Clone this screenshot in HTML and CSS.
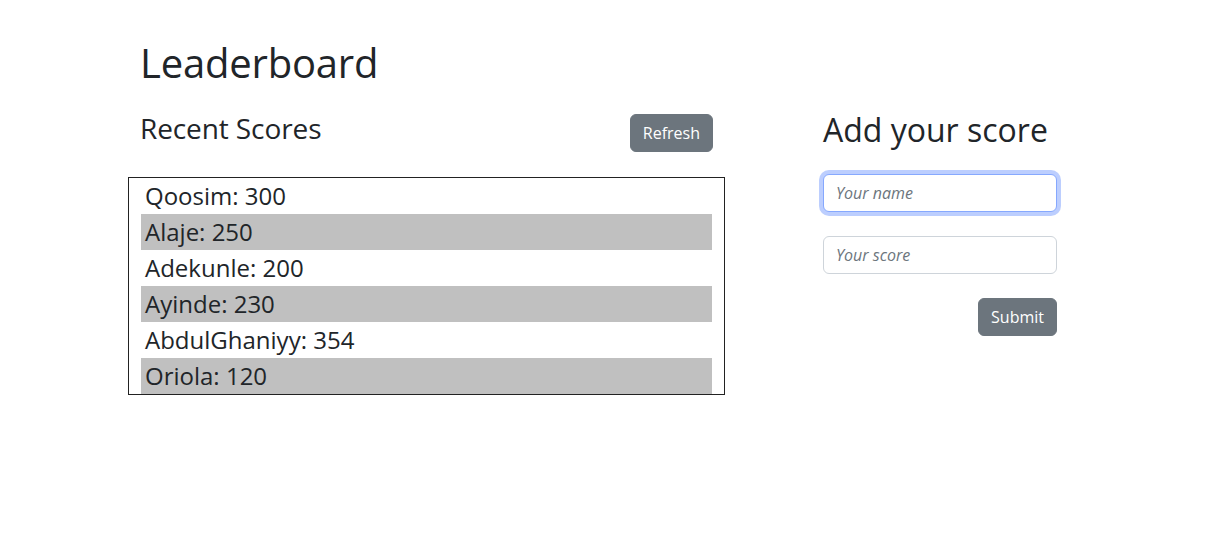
FILE: index.html
```html
<!DOCTYPE html>
<html lang="en">
<head>
<meta charset="utf-8">
<title>Leaderboard</title>
<link rel="stylesheet" href="styles.css">
</head>
<body>
<div class="page">
  <h1 class="title">Leaderboard</h1>
  <div class="columns">
    <section class="scores">
      <div class="scores-head">
        <h3 class="scores-title">Recent Scores</h3>
        <button type="button" class="btn btn-refresh">Refresh</button>
      </div>
      <ul class="score-list">
        <li class="score-item">Qoosim: 300</li>
        <li class="score-item">Alaje: 250</li>
        <li class="score-item">Adekunle: 200</li>
        <li class="score-item">Ayinde: 230</li>
        <li class="score-item">AbdulGhaniyy: 354</li>
        <li class="score-item">Oriola: 120</li>
      </ul>
    </section>
    <section class="add">
      <h2 class="add-title">Add your score</h2>
      <form class="add-form">
        <input class="field is-focused" type="text" placeholder="Your name">
        <input class="field" type="text" placeholder="Your score">
        <div class="actions">
          <button type="button" class="btn">Submit</button>
        </div>
      </form>
    </section>
  </div>
</div>
</body>
</html>
```

FILE: styles.css
```css
* { box-sizing: border-box; }

body {
  margin: 0;
  background: #fff;
  color: #212529;
  font-family: "Open Sans", "DejaVu Sans", sans-serif;
  font-size: 16px;
  line-height: 1.5;
}

.page {
  padding: 39px 0 0 128px;
}

.title {
  margin: 0 0 23px 0;
  padding-left: 12px;
  font-size: 40px;
  font-weight: 400;
  line-height: 1.2;
  letter-spacing: -0.2px;
}

.columns {
  display: flex;
  align-items: flex-start;
  gap: 98px;
}

.scores {
  width: 597px;
}

.scores-head {
  display: flex;
  justify-content: space-between;
  align-items: flex-start;
  padding: 2px 12px 0 12px;
  height: 67px;
}

.scores-title {
  margin: 0;
  font-size: 28px;
  font-weight: 400;
  line-height: 1.2;
  letter-spacing: -0.1px;
}

.btn {
  font-family: inherit;
  font-size: 16px;
  line-height: 24px;
  padding: 6px 12px;
  color: #fff;
  background: #6c757d;
  border: 1px solid #6c757d;
  border-radius: 6px;
  cursor: pointer;
}

.btn-refresh {
  margin-top: 2px;
}

.score-list {
  list-style: none;
  margin: 0;
  padding: 0 12px;
  border: 1px solid #222;
}

.score-item {
  padding-left: 4px;
  font-size: 24px;
  line-height: 36px;
  height: 36px;
}

.score-item:nth-child(even) {
  background: #c0c0c0;
}

.add {
  width: 234px;
  padding-top: 1px;
}

.add-title {
  margin: 0 0 25px 0;
  font-size: 32px;
  font-weight: 400;
  line-height: 1.2;
}

.add-form {
  display: flex;
  flex-direction: column;
  gap: 24px;
}

.field {
  display: block;
  width: 100%;
  height: 38px;
  padding: 6px 12px;
  font-family: inherit;
  font-size: 16px;
  line-height: 24px;
  color: #212529;
  background: #fff;
  border: 1px solid #ced4da;
  border-radius: 6px;
  outline: none;
}

.field::placeholder {
  color: #6c757d;
  font-style: italic;
}

.field.is-focused {
  border-color: #86a8fe;
  box-shadow: 0 0 0 4px rgba(13, 80, 253, 0.28);
}

.actions {
  display: flex;
  justify-content: flex-end;
}
```
